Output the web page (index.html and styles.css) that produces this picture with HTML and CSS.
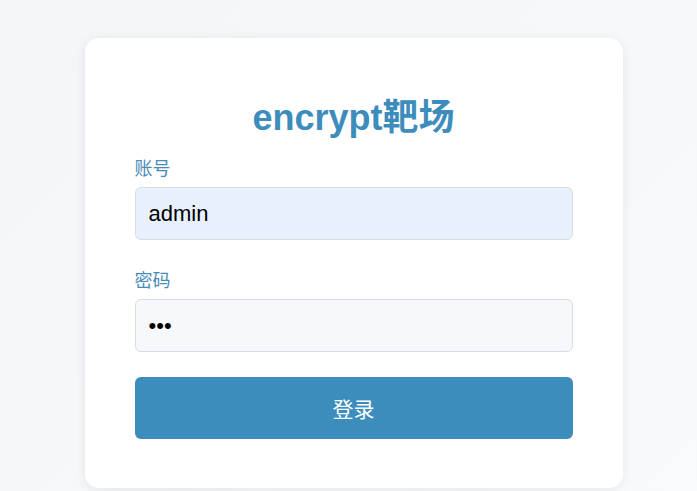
FILE: index.html
```html
<!DOCTYPE html>
<html lang="zh-CN">
<head>
    <meta charset="UTF-8">
    <meta name="viewport" content="width=device-width, initial-scale=1.0">
    <title>encrypt靶场</title>
    <link rel="stylesheet" href="styles.css">
</head>
<body>
    <div class="login-box">
        <h1 class="title">encrypt靶场</h1>
        <form class="login-form" onsubmit="return false;">
            <div class="field">
                <label for="username">账号</label>
                <input type="text" id="username" class="autofill" value="admin">
            </div>
            <div class="field">
                <label for="password">密码</label>
                <input type="password" id="password" value="123">
            </div>
            <button type="submit" class="btn">登录</button>
        </form>
    </div>
</body>
</html>
```

FILE: styles.css
```css
*{margin: 0;padding: 0;box-sizing: border-box;}

body{
    font-family: "Liberation Sans", Arial, "Noto Sans CJK SC", sans-serif;
    background: linear-gradient(135deg, #f3f5f8 0%, #f9fafc 100%);
    height: 491px;
    overflow: hidden;
    padding: 38px 0 0 10px;
}

.login-box{
    width: 538px;
    margin: 0 auto;
    background: #fff;
    border-radius: 14px;
    box-shadow: 0 2px 12px rgba(0,0,0,0.08);
    padding: 58px 50px 49px;
}

.title{
    text-align: center;
    color: #3c8dbc;
    font-size: 36px;
    font-weight: bold;
    line-height: 44px;
    margin-bottom: 18px;
}

.field + .field{margin-top: 30px;}

.field label{
    display: block;
    color: #4a8ab8;
    font-size: 18px;
    line-height: 22px;
    margin-bottom: 7px;
}

.field input{
    display: block;
    width: 100%;
    height: 53px;
    border: 1px solid #d8dde3;
    border-radius: 6px;
    background: #f7f8fb;
    padding: 0 13px;
    font-family: inherit;
    font-size: 22px;
    color: #000;
    outline: none;
}

.field input.autofill{background: #e8f0fe;}

.btn{
    display: block;
    width: 100%;
    height: 62px;
    margin-top: 25px;
    border: none;
    border-radius: 6px;
    background: #3c8dbc;
    color: #fff;
    font-family: inherit;
    font-size: 21px;
    cursor: pointer;
}
```
